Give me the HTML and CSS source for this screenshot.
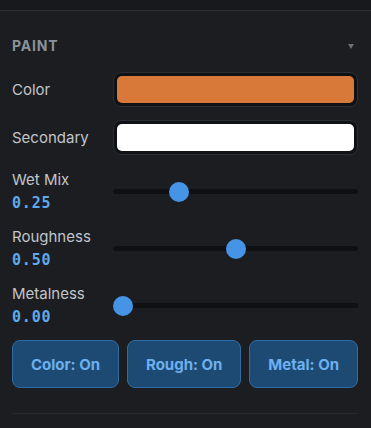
FILE: index.html
```html
<!DOCTYPE html>
<html>
<head>
<meta charset="utf-8">
<link rel="stylesheet" href="styles.css">
</head>
<body>
<div class="topbar"></div>
<section class="panel">
  <header class="panel-head">
    <span class="title">PAINT</span>
    <svg class="caret" width="6" height="5" viewBox="0 0 6 5"><polygon points="0,0 6,0 3,5" fill="#6b7077"/></svg>
  </header>

  <div class="row color-row">
    <span class="label">Color</span>
    <div class="swatch"><div class="fill orange"></div></div>
  </div>
  <div class="row color-row second">
    <span class="label">Secondary</span>
    <div class="swatch"><div class="fill white"></div></div>
  </div>

  <div class="row slider-row">
    <div class="meta"><span class="label">Wet Mix</span><span class="value">0.25</span></div>
    <input type="range" min="0" max="1" step="0.01" value="0.25">
  </div>
  <div class="row slider-row">
    <div class="meta"><span class="label">Roughness</span><span class="value">0.50</span></div>
    <input type="range" min="0" max="1" step="0.01" value="0.5">
  </div>
  <div class="row slider-row">
    <div class="meta"><span class="label">Metalness</span><span class="value">0.00</span></div>
    <input type="range" min="0" max="1" step="0.01" value="0">
  </div>

  <div class="buttons">
    <button class="toggle">Color: On</button>
    <button class="toggle">Rough: On</button>
    <button class="toggle">Metal: On</button>
  </div>

  <div class="divider"></div>
</section>
</body>
</html>
```

FILE: styles.css
```css
html, body {
  margin: 0;
  padding: 0;
  background: #1b1d21;
  font-family: Inter, "Noto Sans", sans-serif;
  height: 428px;
  overflow: hidden;
}
.topbar {
  height: 10px;
  background: #17191c;
  border-bottom: 1px solid #2b2e33;
}
.panel {
  padding: 0 13px 0 12px;
}
.panel-head {
  display: flex;
  align-items: center;
  justify-content: space-between;
  height: 20px;
  margin-top: 24px;
}
.title {
  font-size: 14px;
  font-weight: 700;
  letter-spacing: 0.8px;
  color: #8c9199;
}
.caret {
  margin-right: 4px;
  margin-top: 2px;
}
.row {
  display: grid;
  grid-template-columns: 101px 1fr;
  align-items: center;
}
.color-row {
  margin-top: 17px;
}
.color-row.second {
  margin-top: 13px;
}
.label {
  font-size: 15px;
  line-height: 18px;
  color: #c2c5ca;
}
.swatch {
  height: 27px;
  padding: 3px;
  border: 1px solid #2b2e34;
  background: #0f1114;
  border-radius: 8px;
}
.fill {
  height: 100%;
  border-radius: 5px;
}
.orange { background: #d8793a; }
.white { background: #ffffff; }

.slider-row {
  margin-top: 16px;
}
.meta {
  display: flex;
  flex-direction: column;
  gap: 5px;
}
.value {
  font-family: "DejaVu Sans Mono", monospace;
  font-weight: 700;
  font-size: 15px;
  line-height: 18px;
  letter-spacing: 0.8px;
  color: #5ea9ec;
}
input[type=range] {
  -webkit-appearance: none;
  appearance: none;
  width: 100%;
  height: 20px;
  margin: 0;
  background: transparent;
}
input[type=range]::-webkit-slider-runnable-track {
  height: 5px;
  background: #0e1013;
  border-radius: 3px;
}
input[type=range]::-webkit-slider-thumb {
  -webkit-appearance: none;
  width: 20px;
  height: 20px;
  border-radius: 50%;
  background: #4694e6;
  margin-top: -7.5px;
  border: none;
}
.buttons {
  display: flex;
  gap: 8px;
  margin-top: 14px;
}
.toggle {
  flex: 1 1 auto;
  height: 48px;
  padding: 0 4px;
  background: #1d4a73;
  border: 1px solid #2f6ca3;
  border-radius: 8px;
  color: #6cb0ef;
  font-family: Inter, "Noto Sans", sans-serif;
  font-size: 15px;
  font-weight: 700;
}
.divider {
  margin-top: 25px;
  height: 1px;
  background: #26292e;
}
```
